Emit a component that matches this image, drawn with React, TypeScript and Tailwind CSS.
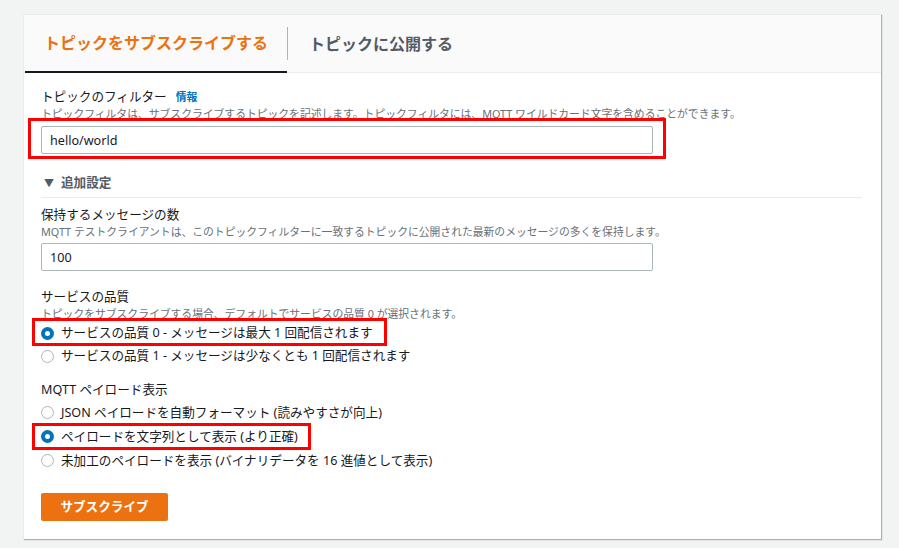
import React, { useState } from 'react';

const font = "font-['Noto_Sans','Noto_Sans_CJK_JP',sans-serif]";

function Radio({ checked, label, onClick }: { checked: boolean; label: string; onClick: () => void }) {
  return (
    <div className="flex items-center cursor-pointer" onClick={onClick}>
      {checked ? (
        <span className="w-[13px] h-[13px] rounded-full bg-[#0073bb] flex items-center justify-center">
          <span className="w-[5px] h-[5px] rounded-full bg-white" />
        </span>
      ) : (
        <span className="w-[13px] h-[13px] rounded-full border border-[#aab7b8] bg-white" />
      )}
      <span className="ml-[7px] text-[12.6px] text-[#16191f]">{label}</span>
    </div>
  );
}

function App() {
  const [qos, setQos] = useState(0);
  const [payload, setPayload] = useState(1);
  const [topic, setTopic] = useState('hello/world');
  const [count, setCount] = useState('100');

  return (
    <div className={`${font} bg-[#f2f3f3] w-[899px] h-[548px] pt-[14px] overflow-hidden`}>
      <div className="ml-[23px] w-[858px] bg-white border-t border-l border-[#eaeded] shadow-[1px_1px_1px_0_rgba(0,28,36,0.3)]">
        {/* tabs */}
        <div className="h-[58px] bg-[#fafafa] border-b border-[#eaeded] flex items-stretch">
          <div className="ml-[1px] w-[262px] flex items-center justify-center border-b-2 border-[#16191f] -mb-px">
            <span className="text-[16px] font-bold text-[#ec7211]">トピックをサブスクライブする</span>
          </div>
          <div className="w-px h-[33px] bg-[#aab7b8] self-center" />
          <div className="pl-[21px] flex items-center">
            <span className="text-[16px] font-bold text-[#545b64]">トピックに公開する</span>
          </div>
        </div>

        <div className="pl-[17px] pr-[18px] pt-[15px] pb-[18px]">
          <div className="h-[18px] flex items-center text-[12.6px] text-[#16191f]">
            トピックのフィルター
            <span className="ml-[9px] text-[10.8px] font-bold text-[#0073bb]">情報</span>
          </div>
          <div className="h-[16px] leading-[16px] text-[10.8px] text-[#687078] whitespace-nowrap">
            トピックフィルタは、サブスクライブするトピックを記述します。トピックフィルタには、MQTT ワイルドカード文字を含めることができます。
          </div>
          <div className="relative mt-[4px] w-[612px]">
            <input
              value={topic}
              onChange={(e) => setTopic(e.target.value)}
              className="block w-full h-[28px] border border-[#aab7b8] rounded-[2px] px-[8px] text-[12.6px] text-[#16191f] outline-none"
            />
            <div className="absolute -left-[13px] -right-[13px] -top-[8px] -bottom-[5px] border-[3px] border-[#ff0000] pointer-events-none" />
          </div>

          <div className="mt-[20px] pb-[5px] border-b border-[#eaeded] mr-[1px]">
            <div className="h-[18px] flex items-center text-[12.6px] font-bold text-[#545b64]">
              <span className="ml-[3px] text-[10px] text-[#545b64]">▼</span>
              <span className="ml-[7px]">追加設定</span>
            </div>
          </div>

          <div className="mt-[8px] h-[18px] flex items-center text-[12.6px] text-[#16191f]">保持するメッセージの数</div>
          <div className="h-[16px] leading-[16px] text-[10.8px] text-[#687078] whitespace-nowrap">
            MQTT テストクライアントは、このトピックフィルターに一致するトピックに公開された最新のメッセージの多くを保持します。
          </div>
          <input
            value={count}
            onChange={(e) => setCount(e.target.value)}
            className="block mt-[3px] w-[612px] h-[28px] border border-[#aab7b8] rounded-[2px] px-[8px] text-[12.6px] text-[#16191f] outline-none"
          />

          <div className="mt-[17px] h-[18px] flex items-center text-[12.6px] text-[#16191f]">サービスの品質</div>
          <div className="h-[16px] leading-[16px] text-[10.8px] text-[#687078] whitespace-nowrap">
            トピックをサブスクライブする場合、デフォルトでサービスの品質 0 が選択されます。
          </div>
          <div className="relative h-[23px] flex items-center">
            <Radio checked={qos === 0} onClick={() => setQos(0)} label="サービスの品質 0 - メッセージは最大 1 回配信されます" />
            <div className="absolute -left-[9px] w-[355px] -top-[4px] -bottom-[1px] border-[3px] border-[#ff0000] pointer-events-none" />
          </div>
          <div className="h-[23px] flex items-center">
            <Radio checked={qos === 1} onClick={() => setQos(1)} label="サービスの品質 1 - メッセージは少なくとも 1 回配信されます" />
          </div>

          <div className="mt-[13px] h-[18px] flex items-center text-[12.6px] text-[#16191f]">MQTT ペイロード表示</div>
          <div className="mt-[2px] h-[24px] flex items-center">
            <Radio checked={payload === 0} onClick={() => setPayload(0)} label="JSON ペイロードを自動フォーマット (読みやすさが向上)" />
          </div>
          <div className="relative h-[24px] flex items-center">
            <Radio checked={payload === 1} onClick={() => setPayload(1)} label="ペイロードを文字列として表示 (より正確)" />
            <div className="absolute -left-[9px] w-[279px] -top-[2px] -bottom-[1px] border-[3px] border-[#ff0000] pointer-events-none" />
          </div>
          <div className="h-[24px] flex items-center">
            <Radio checked={payload === 2} onClick={() => setPayload(2)} label="未加工のペイロードを表示 (バイナリデータを 16 進値として表示)" />
          </div>

          <button className="block mt-[20px] w-[127px] h-[28px] bg-[#ec7211] rounded-[2px] text-white text-[12.6px] font-bold">
            サブスクライブ
          </button>
        </div>
      </div>
    </div>
  );
}

export default App;
